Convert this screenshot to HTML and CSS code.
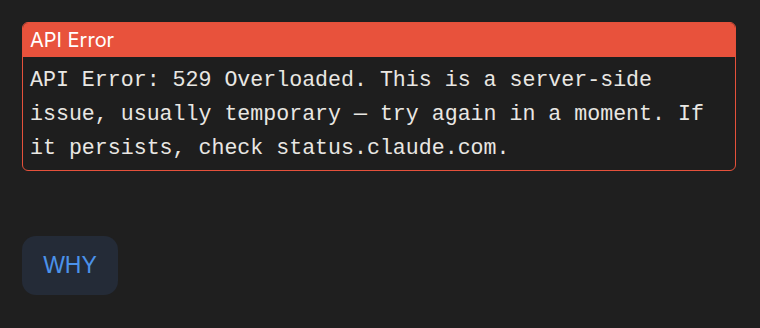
FILE: index.html
```html
<!DOCTYPE html>
<html lang="en">
<head>
<meta charset="utf-8">
<title>API Error</title>
<link rel="stylesheet" href="styles.css">
</head>
<body>
<main class="page">
  <section class="error-card">
    <header class="error-head">API Error</header>
    <div class="error-body">API Error: 529 Overloaded. This is a server-side issue, usually temporary — try again in a moment. If it persists, check status.claude.com.</div>
  </section>
  <button class="why-btn" type="button">WHY</button>
</main>
</body>
</html>
```

FILE: styles.css
```css
html, body {
  margin: 0;
  padding: 0;
  background: #1f1f1f;
}

.page {
  display: flex;
  flex-direction: column;
  align-items: flex-start;
  padding: 22px 24px 0 22px;
  gap: 65px;
}

.error-card {
  align-self: stretch;
  border: 1px solid #e5513b;
  border-radius: 6px;
  overflow: hidden;
  background: #1e1e1e;
}

.error-head {
  background: #e8523c;
  color: #ffffff;
  font-family: "Inter", "Noto Sans", sans-serif;
  font-size: 20px;
  line-height: 35px;
  padding: 0 7px;
  height: 34px;
}

.error-body {
  color: #e9e7e3;
  font-family: "Liberation Mono", monospace;
  font-size: 21.6px;
  line-height: 34px;
  padding: 6px 7px 5px;
}

.why-btn {
  width: 96px;
  height: 59px;
  border: none;
  border-radius: 14px;
  background: #242b37;
  color: #4b92ea;
  font-family: "Liberation Sans", "Arial", sans-serif;
  font-size: 23px;
  padding: 0;
  cursor: pointer;
}
```
